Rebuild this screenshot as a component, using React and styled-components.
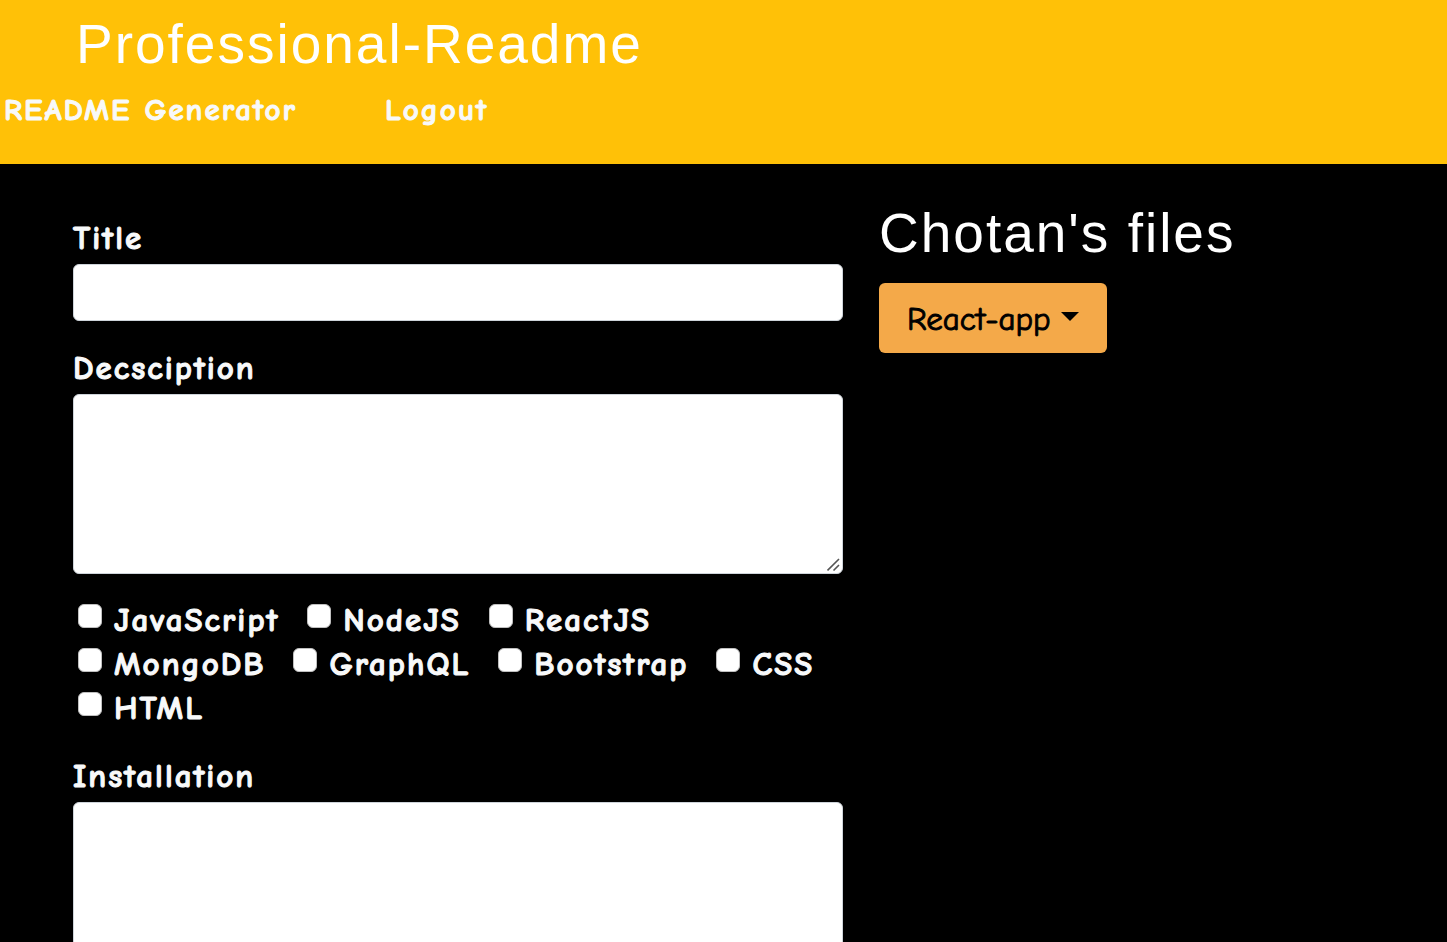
import React from "react";
import styled, { createGlobalStyle } from "styled-components";

const GlobalStyle = createGlobalStyle`
  *, *::before, *::after { box-sizing: border-box; }
  body {
    margin: 0;
    background: #000;
    color: #f8f9fa;
    font-family: "Comic Sans MS", "Comic Neue", "Open Sans", cursive, sans-serif;
    font-size: 33px;
  }
`;

const Header = styled.header`
  min-height: 164px;
  padding-top: 12px;
  background: #ffc107;
`;

const Heading = styled.h1`
  margin: 0;
  color: #fff;
  font-family: Arial, "Liberation Sans", sans-serif;
  font-size: 55px;
  font-weight: 400;
  letter-spacing: 2px;
  line-height: 64px;
`;

const Brand = styled(Heading)`
  padding: 0 76px;
`;

const Nav = styled.nav`
  display: flex;
  gap: 88px;
  padding: 12px 4px 0;
`;

const NavLink = styled.a`
  color: #f8f9fa;
  font-size: 31px;
  font-weight: 700;
  letter-spacing: 2px;
  line-height: 44px;
  text-decoration: none;
  -webkit-text-stroke: 1px currentColor;
`;

const Main = styled.main`
  display: grid;
  grid-template-columns: 14fr 9fr;
  column-gap: 36px;
  padding: 37px 73px 24px;
`;

const Form = styled.form`
  min-width: 0;
  padding-top: 15px;
`;

const Field = styled.div`
  display: flex;
  flex-direction: column;
  margin-bottom: 25px;
`;

const Label = styled.label`
  margin-bottom: 4px;
  font-weight: 700;
  letter-spacing: 2px;
  line-height: 44px;
  -webkit-text-stroke: 1px currentColor;
`;

const TextInput = styled.input`
  width: 100%;
  height: 57px;
  padding: 8px 18px;
  border: 1px solid #ced4da;
  border-radius: 6px;
  background: #fff;
  color: #212529;
  font: inherit;
`;

const TextArea = styled.textarea`
  display: block;
  width: 100%;
  height: 180px;
  padding: 8px 18px;
  border: 1px solid #ced4da;
  border-radius: 6px;
  background: #fff;
  color: #212529;
  font: inherit;
  resize: vertical;

  &::-webkit-resizer {
    background: url("data:image/svg+xml,%3Csvg xmlns='http://www.w3.org/2000/svg' width='15' height='15'%3E%3Cpath d='M0.5 12.5L12 1M6.5 12.5L12 7' stroke='%23555' stroke-width='1.6'/%3E%3C/svg%3E") no-repeat;
  }
`;

const Checks = styled.div`
  display: flex;
  flex-wrap: wrap;
  column-gap: 28px;
  margin: -5px 0 28px;
  padding-left: 5px;
`;

const CheckItem = styled.label`
  display: flex;
  align-items: flex-start;
  gap: 12px;
  height: 44px;
  font-weight: 700;
  letter-spacing: 2px;
  line-height: 52px;
  -webkit-text-stroke: 1px currentColor;
`;

const Checkbox = styled.input`
  appearance: none;
  width: 24px;
  height: 24px;
  margin: 10px 0 0;
  border: 1px solid #bfbfbf;
  border-radius: 6px;
  background: #fff;

  &:checked {
    border-color: #0d6efd;
    background: #0d6efd;
  }
`;

const Files = styled.section`
  min-width: 0;
`;

const DropdownToggle = styled.button`
  display: inline-flex;
  align-items: center;
  gap: 10px;
  height: 70px;
  margin-top: 18px;
  padding: 2px 28px 0;
  border: 0;
  border-radius: 6px;
  background: #f4a949;
  color: #000;
  font: inherit;
  line-height: 44px;
  cursor: pointer;
  -webkit-text-stroke: 1px currentColor;
`;

const Caret = styled.span`
  margin-bottom: 6px;
  border-top: 9px solid currentColor;
  border-right: 9px solid transparent;
  border-left: 9px solid transparent;
`;

const TOOLS = ["JavaScript", "NodeJS", "ReactJS", "MongoDB", "GraphQL", "Bootstrap", "CSS", "HTML"];

export default function App() {
  return (
    <>
      <GlobalStyle />
      <Header>
        <Brand>Professional-Readme</Brand>
        <Nav>
          <NavLink href="#generator">README Generator</NavLink>
          <NavLink href="#logout">Logout</NavLink>
        </Nav>
      </Header>
      <Main>
        <Form>
          <Field>
            <Label htmlFor="title">Title</Label>
            <TextInput id="title" type="text" />
          </Field>
          <Field>
            <Label htmlFor="description">Decsciption</Label>
            <TextArea id="description" />
          </Field>
          <Checks>
            {TOOLS.map((tool) => (
              <CheckItem key={tool}>
                <Checkbox type="checkbox" name="tools" value={tool} />
                {tool}
              </CheckItem>
            ))}
          </Checks>
          <Field>
            <Label htmlFor="installation">Installation</Label>
            <TextArea id="installation" />
          </Field>
        </Form>
        <Files>
          <Heading as="h2">Chotan's files</Heading>
          <DropdownToggle type="button" aria-haspopup="menu">
            React-app
            <Caret />
          </DropdownToggle>
        </Files>
      </Main>
    </>
  );
}
